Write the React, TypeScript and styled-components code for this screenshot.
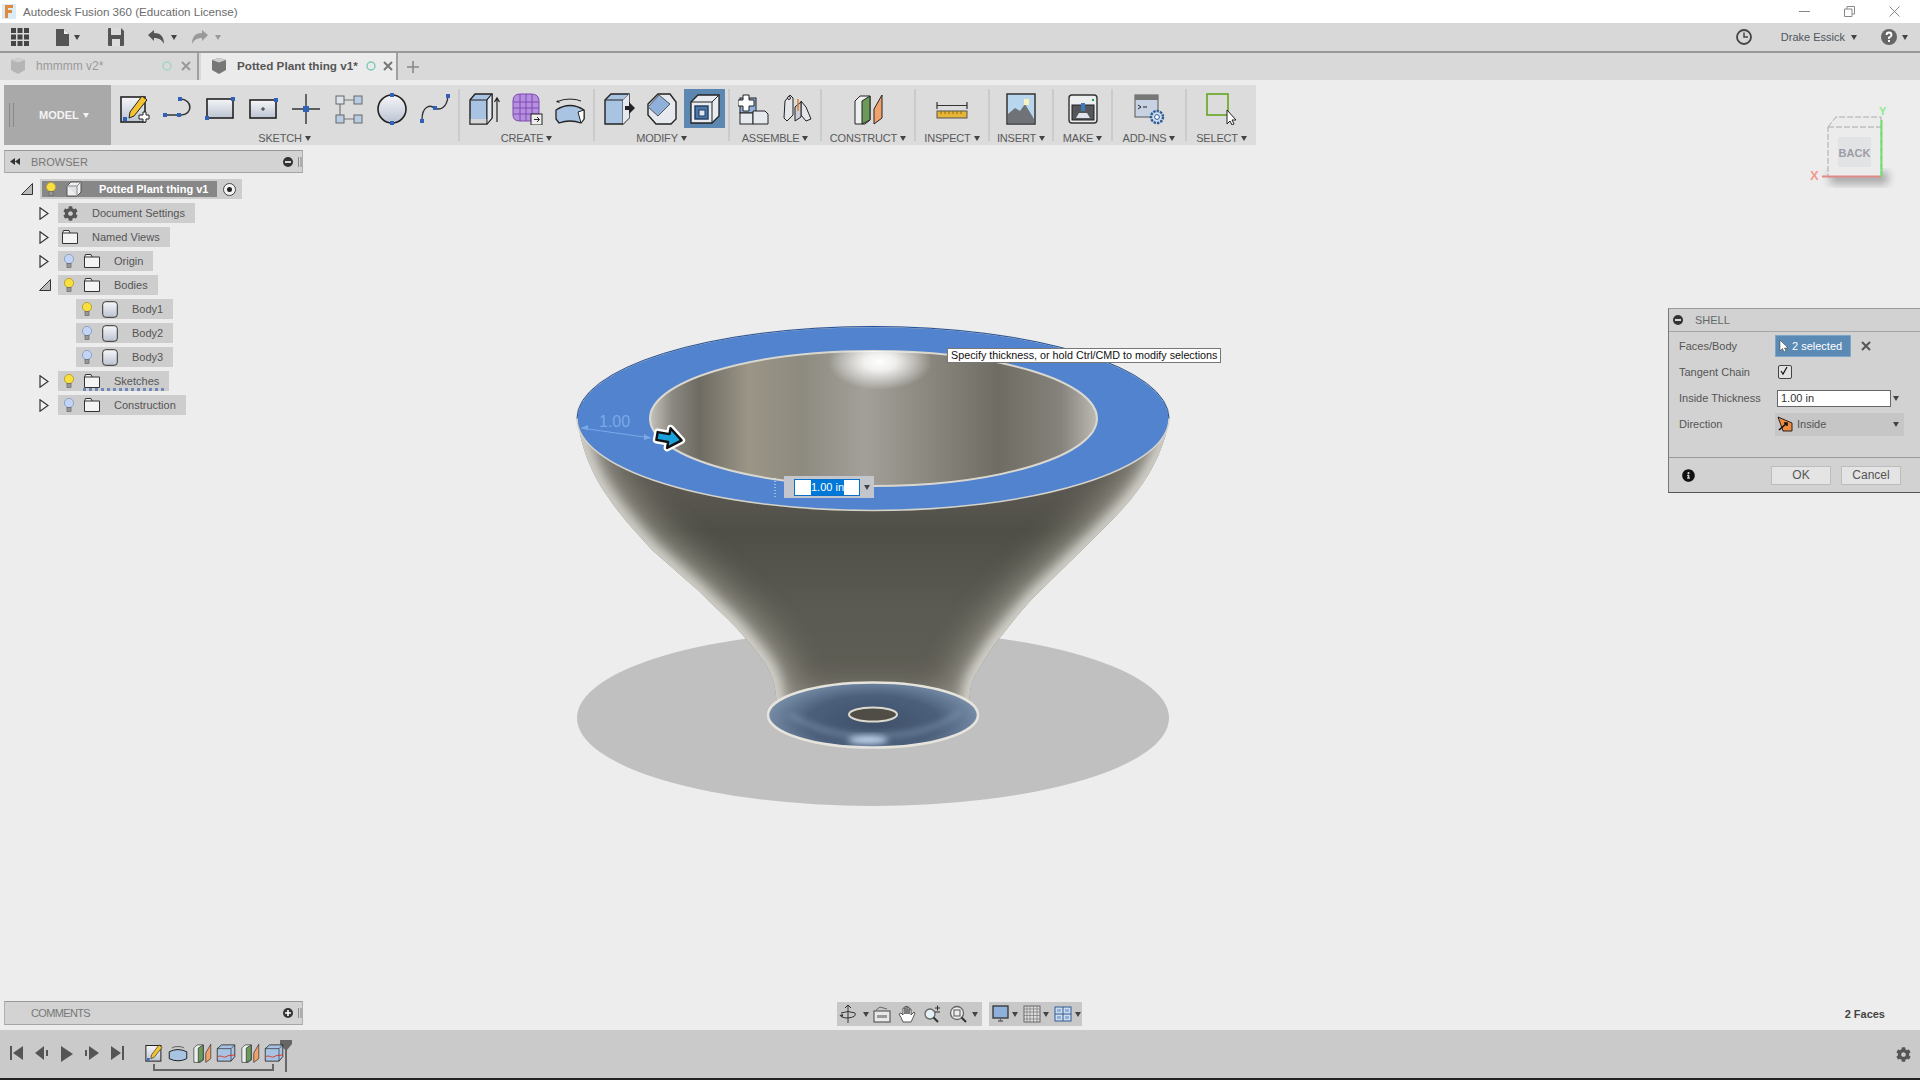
import React from "react";
import styled, { createGlobalStyle } from "styled-components";
import { FaCog, FaInfoCircle } from "react-icons/fa";

const GlobalStyle = createGlobalStyle`
  html, body {
    margin: 0;
    height: 100%;
    overflow: hidden;
    background: #ededed;
    font-family: "Liberation Sans", Arial, sans-serif;
  }
`;

const Shell = styled.div`
  height: 100vh;
  display: flex;
  flex-direction: column;
  color: #555;
  font-size: 11px;
`;

/* title + quick access */
const TitleBar = styled.div`
  height: 23px;
  background: #fff;
  display: flex;
  align-items: center;
  padding: 0 3px 0 2px;
  font-size: 11.6px;
  color: #6b6b6b;
`;
const TitleText = styled.span`
  margin-left: 7px;
  flex: 1;
`;
const WindowBtn = styled.span`
  width: 45px;
  height: 21px;
  display: flex;
  align-items: center;
  justify-content: center;
`;
const QuickBar = styled.div`
  height: 28px;
  background: #d8d8d8;
  display: flex;
  align-items: center;
  padding-left: 11px;
`;
const QuickRight = styled.div`
  margin-left: auto;
  display: flex;
  align-items: center;
  padding-right: 12px;
`;
const UserName = styled.span`
  color: #4d5560;
  font-size: 11px;
  margin: 0 6px 0 29px;
`;
const Caret = styled.i<{ $m?: number; $c?: string }>`
  display: inline-block;
  width: 0;
  height: 0;
  flex: none;
  border-left: 3.5px solid transparent;
  border-right: 3.5px solid transparent;
  border-top: 5px solid ${(p) => p.$c || "#444"};
  margin-left: ${(p) => p.$m ?? 4}px;
`;

/* tabs */
const TabBar = styled.div`
  height: 29px;
  box-sizing: border-box;
  border-top: 2px solid #999;
  background: #d9d9d9;
  display: flex;
  align-items: stretch;
`;
const Tab = styled.div<{ $active?: boolean; $w: number }>`
  width: ${(p) => p.$w}px;
  box-sizing: border-box;
  display: flex;
  align-items: center;
  padding-left: 9px;
  padding-bottom: 2px;
  background: ${(p) => (p.$active ? "#ebebeb" : "transparent")};
  border-right: 2px solid #a0a0a0;
  color: ${(p) => (p.$active ? "#555" : "#999")};
  font-size: ${(p) => (p.$active ? 11.7 : 12)}px;
  font-weight: ${(p) => (p.$active ? 700 : 400)};
  margin-right: ${(p) => (p.$active ? 0 : 2)}px;
`;
const TabName = styled.span<{ $w: number }>`
  margin-left: 9px;
  width: ${(p) => p.$w}px;
  white-space: nowrap;
`;
const TabClose = styled.span<{ $m: number }>`
  margin-left: ${(p) => p.$m}px;
  display: flex;
`;
const PlusTab = styled.span`
  margin-left: 9px;
  display: flex;
  align-items: center;
`;

/* viewport */
const Viewport = styled.div`
  flex: 1;
  min-height: 0;
  position: relative;
  background: #ededed;
`;
const Scene = styled.svg`
  position: absolute;
  inset: 0;
`;
const LeftColumn = styled.div`
  position: relative;
  height: 100%;
  box-sizing: border-box;
  display: flex;
  flex-direction: column;
  align-items: flex-start;
  padding: 5px 0 4px 4px;
`;

/* toolbar */
const Toolbar = styled.div`
  height: 60px;
  display: flex;
  background: #dcdcdc;
`;
const ModelBtn = styled.div`
  width: 107px;
  background: #a9a9a9;
  display: flex;
  align-items: center;
  color: #f4f4f4;
  font-size: 11px;
  font-weight: 700;
  padding-left: 5px;
  box-sizing: border-box;
`;
const Grip = styled.span`
  width: 3px;
  height: 24px;
  border-left: 1px solid #8a8a8a;
  border-right: 1px solid #8a8a8a;
  margin-right: 25px;
`;
const ToolGroup = styled.div<{ $w: number }>`
  width: ${(p) => p.$w}px;
  box-sizing: border-box;
  display: flex;
  flex-direction: column;
  align-items: center;
`;
const ToolIcons = styled.div`
  height: 47px;
  display: flex;
  align-items: center;
  justify-content: center;
`;
const ToolCell = styled.div<{ $active?: boolean }>`
  width: 41px;
  height: 39px;
  margin: 0 1px;
  display: flex;
  align-items: center;
  justify-content: center;
  background: ${(p) => (p.$active ? "#5b87b0" : "transparent")};
`;
const ToolLabel = styled.div`
  display: flex;
  align-items: center;
  font-size: 11px;
  color: #5a5a5a;
  white-space: nowrap;
  letter-spacing: -0.2px;
`;
const Divider = styled.div`
  width: 2px;
  margin: 4px 0;
  background: #cbcbcb;
`;
const Ico = styled.svg.attrs({ viewBox: "0 0 32 32" })<{ $s?: number }>`
  width: ${(p) => p.$s ?? 32}px;
  height: ${(p) => p.$s ?? 32}px;
  flex: none;
  display: block;
`;

/* panels */
const SidePanel = styled.div<{ $auto?: boolean }>`
  width: 299px;
  height: ${(p) => (p.$auto ? 24 : 23)}px;
  box-sizing: border-box;
  margin-top: ${(p) => (p.$auto ? "auto" : "5px")};
  margin-bottom: ${(p) => (p.$auto ? 1 : 0)}px;
  background: #d3d3d3;
  border: 1px solid #b0b0b0;
  border-top-color: #999;
  border-bottom-color: #a5a5a5;
  display: flex;
  align-items: center;
  color: #777;
  font-size: 11px;
`;
const PanelTitle = styled.span<{ $tight?: boolean }>`
  flex: 1;
  margin-left: 26px;
  letter-spacing: ${(p) => (p.$tight ? "-0.65px" : "0")};
`;
const PanelRewind = styled.span`
  width: 0;
  display: flex;
`;
const Tree = styled.div`
  margin-top: 4px;
`;
const Row = styled.div<{ $depth: number }>`
  height: 24px;
  display: flex;
  align-items: center;
  padding-left: ${(p) => 17 + p.$depth * 18}px;
`;
const Toggle = styled.span`
  width: 19px;
  height: 20px;
  display: flex;
  align-items: center;
`;
const Chip = styled.div<{ $root?: boolean }>`
  height: 20px;
  background: #cdcdcd;
  display: flex;
  align-items: center;
  position: relative;
  padding-right: ${(p) => (p.$root ? 25 : 10)}px;
  color: #555;
  white-space: nowrap;
`;
const RootFill = styled.div`
  height: 16px;
  margin-left: 2px;
  background: #878787;
  color: #fff;
  font-weight: 700;
  display: flex;
  align-items: center;
  padding-right: 9px;
`;
const Slot = styled.span<{ $w?: number }>`
  width: ${(p) => p.$w ?? 22}px;
  display: flex;
  justify-content: center;
  align-items: center;
`;
const RowText = styled.span<{ $m?: number }>`
  margin-left: ${(p) => p.$m ?? 11}px;
`;
const RadioWrap = styled.span`
  position: absolute;
  right: 6px;
  display: flex;
`;
const Squiggle = styled.span`
  position: absolute;
  left: 25px;
  right: 2px;
  bottom: 0;
  height: 3px;
  background: repeating-linear-gradient(90deg, #6f88b8 0 3px, transparent 3px 6px);
`;

/* shell dialog */
const Dialog = styled.div`
  position: absolute;
  top: 228px;
  right: 0;
  width: 252px;
  height: 185px;
  box-sizing: border-box;
  background: #d2d2d2;
  border-top: 1px solid #999;
  border-left: 1px solid #777;
  border-bottom: 1px solid #555;
  display: flex;
  flex-direction: column;
  font-size: 11px;
  color: #555;
`;
const DialogHead = styled.div`
  height: 23px;
  flex: none;
  box-sizing: border-box;
  display: flex;
  align-items: center;
  padding: 0 0 1px 4px;
  border-bottom: 1px solid #a5a5a5;
  color: #666;
`;
const DialogBody = styled.div`
  flex: 1;
  padding: 1px 0 0 10px;
  display: grid;
  grid-template-columns: 96px 1fr;
  grid-auto-rows: 26px;
  align-items: center;
  align-content: start;
`;
const ValueRow = styled.div`
  display: flex;
  align-items: center;
`;
const SelectBtn = styled.div`
  width: 76px;
  height: 22px;
  background: #5b8ab4;
  border: 1px solid #7da6c8;
  box-sizing: border-box;
  color: #fff;
  display: flex;
  align-items: center;
  padding-left: 3px;
  gap: 4px;
`;
const CheckBox = styled.span`
  width: 12px;
  height: 12px;
  margin-left: 3px;
  border: 1px solid #444;
  border-radius: 2px;
  background: #e2e2e2;
  display: flex;
`;
const TextInput = styled.div`
  width: 114px;
  height: 17px;
  margin-left: 2px;
  box-sizing: border-box;
  border: 1px solid #666;
  background: #fff;
  color: #333;
  display: flex;
  align-items: center;
  padding-left: 3px;
`;
const DirSelect = styled.div`
  width: 129px;
  height: 23px;
  background: #c6c6c6;
  display: flex;
  align-items: center;
  padding: 0 5px 0 2px;
  box-sizing: border-box;
`;
const DialogFoot = styled.div`
  height: 35px;
  flex: none;
  box-sizing: border-box;
  border-top: 1px solid #9a9a9a;
  display: flex;
  align-items: center;
  padding-left: 13px;
  color: #111;
  font-size: 13px;
`;
const DialogBtn = styled.div<{ $first?: boolean }>`
  width: 60px;
  height: 19px;
  margin-left: ${(p) => (p.$first ? "76px" : "10px")};
  box-sizing: border-box;
  background: #e4e4e4;
  border: 1px solid #bdbdbd;
  display: flex;
  align-items: center;
  justify-content: center;
  color: #555;
  font-size: 12px;
`;

/* on-canvas overlays */
const Tooltip = styled.div`
  position: absolute;
  left: 947px;
  top: 268px;
  height: 15px;
  box-sizing: border-box;
  padding: 0 3px;
  background: #fff;
  border: 1px solid #777;
  color: #111;
  font-size: 10.75px;
  line-height: 13px;
  white-space: nowrap;
`;
const InlineValue = styled.div`
  position: absolute;
  left: 784px;
  top: 396px;
  width: 90px;
  height: 22px;
  box-sizing: border-box;
  background: #c3c6cc;
  display: flex;
  align-items: center;
  padding-left: 10px;
`;
const InlineInput = styled.div`
  width: 66px;
  height: 17px;
  box-sizing: border-box;
  background: #fff;
  border: 1px solid #0a6fc9;
  display: flex;
  align-items: center;
  padding-left: 16px;
`;
const Selected = styled.span`
  background: #0078d7;
  color: #fff;
  font-size: 11px;
  line-height: 15px;
`;
const Cube = styled.svg`
  position: absolute;
  left: 1800px;
  top: 20px;
`;
const NavBar = styled.div`
  position: absolute;
  left: 837px;
  bottom: 4px;
  display: flex;
  gap: 7px;
`;
const NavGroup = styled.div<{ $w: number; $pad: number }>`
  width: ${(p) => p.$w}px;
  height: 24px;
  background: #c8c8c8;
  display: flex;
  align-items: center;
  padding-left: ${(p) => p.$pad}px;
  box-sizing: border-box;
`;
const FaceCount = styled.div`
  position: absolute;
  right: 35px;
  bottom: 10px;
  font-weight: 700;
  color: #444;
`;

/* timeline */
const Timeline = styled.div`
  height: 50px;
  box-sizing: border-box;
  background: #cacaca;
  border-bottom: 2px solid #222;
  display: flex;
  align-items: center;
  padding: 0 9px 0 9px;
`;
const Transport = styled.div`
  width: 135px;
  display: flex;
  gap: 9px;
  flex: none;
`;
const Steps = styled.div`
  position: relative;
  display: flex;
  gap: 4px;
  padding-bottom: 8px;
  margin-top: 6px;
  flex: none;
`;
const Bracket = styled.div`
  position: absolute;
  left: 9px;
  right: 10px;
  bottom: 0;
  height: 5px;
  border: 2px solid #666;
  border-top: 0;
`;
const Marker = styled.svg`
  margin-left: -4px;
  margin-top: 6px;
  flex: none;
`;
const Gear = styled.div`
  margin-left: auto;
  display: flex;
  color: #555;
  font-size: 15px;
`;

/* small drawings */
const N = ({ x, y, s = 4 }: { x: number; y: number; s?: number }) => (
  <rect x={x - s / 2} y={y - s / 2} width={s} height={s} fill="#2f62b8" />
);
const STROKE = "#333";

const SketchIco = ({ s }: { s?: number }) => (
  <Ico $s={s}>
    <rect x="3" y="4" width="24" height="25" fill="url(#panelGrad)" stroke="#222" strokeWidth="1.6" />
    <path d="M12 19 L24 3 L29 7 L16 23 L11 25Z" fill="#f4c430" stroke="#222" strokeWidth="1" />
    <N x={7} y={26} />
    {!s && <path d="M21 22h4v-3h3v3h3v4h-3v3h-3v-3h-4z" fill="#fff" stroke="#222" />}
  </Ico>
);
const LineIco = () => (
  <Ico>
    <path d="M4 22 H20 C32 22 32 6 19 6" fill="none" stroke={STROKE} strokeWidth="1.6" />
    <N x={4} y={22} />
    <N x={18} y={22} />
    <N x={19} y={6} />
  </Ico>
);
const RectIco = () => (
  <Ico>
    <rect x="3" y="6" width="26" height="19" fill="url(#panelGrad)" stroke="#222" strokeWidth="1.6" />
    <N x={3} y={25} />
    <N x={29} y={6} />
  </Ico>
);
const CenterRectIco = () => (
  <Ico>
    <rect x="3" y="7" width="26" height="18" fill="url(#panelGrad)" stroke="#222" strokeWidth="1.6" />
    <path d="M16 14v4M14 16h4" stroke="#333" />
    <N x={29} y={7} />
  </Ico>
);
const PointIco = () => (
  <Ico>
    <path d="M16 1V31M2 16H30" stroke={STROKE} strokeWidth="1.4" />
    <N x={16} y={16} s={6} />
  </Ico>
);
const PatternIco = () => (
  <Ico>
    <path d="M10 7H22M10 26H22M7 10V23" stroke="#777" strokeWidth="1.2" />
    <rect x="3" y="3" width="8" height="8" fill="#dde3ec" stroke="#666" />
    <rect x="21" y="3" width="8" height="8" fill="#b8cde4" stroke="#666" />
    <rect x="3" y="22" width="8" height="8" fill="#b8cde4" stroke="#666" />
    <rect x="21" y="22" width="8" height="8" fill="#b8cde4" stroke="#666" />
  </Ico>
);
const CircleIco = () => (
  <Ico>
    <ellipse cx="16" cy="16" rx="14" ry="14" fill="url(#panelGrad)" stroke="#222" strokeWidth="1.6" />
    <N x={16} y={2} />
    <N x={16} y={30} />
  </Ico>
);
const SplineIco = () => (
  <Ico>
    <path d="M3 27 C3 12 12 12 15 15 C22 18 28 14 29 3" fill="none" stroke={STROKE} strokeWidth="1.4" />
    <N x={3} y={28} />
    <N x={16} y={15} />
    <N x={29} y={3} />
  </Ico>
);
const ExtrudeIco = () => (
  <Ico>
    <path d="M2 7 L7 1H24V25L19 31H2Z" fill="#a9c4e2" stroke="#222" strokeWidth="1.4" />
    <path d="M2 7H19V31M19 7L24 1" fill="none" stroke="#222" strokeWidth="1.2" />
    <path d="M19 7L24 1V25L19 31Z" fill="#dfe7f0" stroke="#222" />
    <rect x="2.7" y="26" width="15.6" height="4.4" fill="#d6d6d6" />
    <path d="M29 29V6M26.5 9L29 5L31.5 9" fill="none" stroke="#222" strokeWidth="1.2" />
  </Ico>
);
const FormIco = () => (
  <Ico>
    <path d="M2 8 Q2 1 9 1H20Q28 1 28 8V22Q28 28 21 28H9Q2 28 2 22Z" fill="#b78fe0" stroke="#7c4bb0" />
    <path d="M2 9H28M2 15H28M2 21H28M9 1V28M15 1V28M21 1V28" stroke="#7c4bb0" />
    <rect x="20" y="21" width="11" height="11" fill="#eee" stroke="#222" />
    <path d="M23 26.5H28M26 24l2.5 2.5L26 29" fill="none" stroke="#222" />
  </Ico>
);
const RevolveIco = () => (
  <Ico>
    <path d="M5 8 A14 5 0 0 1 27 8" fill="none" stroke="#222" />
    <path d="M4 7L2 9L6 10Z" fill="#222" />
    <path d="M2 17 Q16 8 30 17 V26 L27 30 Q16 26 5 30 L2 26Z" fill="#a9c4e2" stroke="#222" strokeWidth="1.3" />
    <path d="M24 19 L30 17 V26 L27 30Z" fill="#fff" stroke="#222" />
  </Ico>
);
const PressIco = () => (
  <Ico>
    <path d="M2 7 L8 1H26V25L20 31H2Z" fill="#a9c4e2" stroke="#222" strokeWidth="1.4" />
    <path d="M20 31V7L26 1M2 7H20" fill="none" stroke="#222" />
    <path d="M20 7L26 1V25L20 31Z" fill="#e5e9ee" />
    <path d="M22 13h4v-4l6 6-6 6v-4h-4z" fill="#222" />
  </Ico>
);
const FilletIco = () => (
  <Ico>
    <path d="M2 11 L12 1H24L30 9V26L25 31H10L2 22Z" fill="#e6e9ee" stroke="#222" strokeWidth="1.4" />
    <path d="M2 14 L13 2 L24 11 L12 23Z" fill="#8fb0da" stroke="#555" />
  </Ico>
);
const ShellIco = () => (
  <Ico>
    <path d="M2 9L9 2H30V23L23 30H2Z" fill="#e8ecf0" stroke="#222" strokeWidth="1.3" />
    <path d="M2 9H23V30M23 9L30 2" fill="none" stroke="#222" />
    <rect x="6" y="13" width="13" height="13" fill="#4f78a8" stroke="#1d3b60" strokeWidth="1.4" />
    <rect x="10" y="17" width="6" height="6" fill="#dfe7f0" stroke="#1d3b60" />
  </Ico>
);
const NewCompIco = () => (
  <Ico>
    <rect x="2" y="5" width="16" height="15" fill="#8fb0da" stroke="#222" />
    <rect x="2" y="20" width="13" height="11" fill="#e6e9ee" stroke="#222" />
    <path d="M15 31V18h12l3 3v10z" fill="#e6e9ee" stroke="#222" />
    <path d="M5 2h6v5h5v6h-5v5H5v-5H0V7h5z" fill="#fff" stroke="#222" />
  </Ico>
);
const JointIco = () => (
  <Ico>
    <path d="M4 8 L9 2L12 5V22L6 28L3 25Z" fill="#e4e6ea" stroke="#222" />
    <path d="M20 8L25 14L30 26L25 28L20 22Z" fill="#e4e6ea" stroke="#222" />
    <path d="M14 14L20 9V24L14 28Z" fill="#c9ced6" stroke="#222" />
    <path d="M17 6V18" stroke="#e07a20" strokeWidth="1.4" />
    <circle cx="8" cy="5" r="1.5" fill="#fff" stroke="#222" />
  </Ico>
);
const ConstructIco = ({ s }: { s?: number }) => (
  <Ico $s={s}>
    <path d="M3 8L8 3H18V27L13 31H3Z" fill="#eef0f0" stroke="#222" />
    <path d="M10 8L18 3V27L10 31Z" fill="#6b9a5a" stroke="#222" />
    <path d="M22 16L30 2V25L22 31Z" fill="#f1a26c" stroke="#222" />
  </Ico>
);
const InspectIco = () => (
  <Ico>
    <path d="M1 9V16M31 9V16M1 12.5H31" stroke="#333" strokeWidth="1.2" />
    <rect x="1" y="18" width="30" height="7" fill="#e6b437" stroke="#555" />
    <path d="M5 18v3M9 18v3M13 18v3M17 18v3M21 18v3M25 18v3" stroke="#8c6a13" />
  </Ico>
);
const InsertIco = () => (
  <Ico>
    <rect x="2" y="1" width="28" height="30" fill="#b8d6ee" stroke="#333" strokeWidth="1.5" />
    <path d="M3 30V21L10 15L15 18L20 11L29 26V30Z" fill="#6f7378" />
    <rect x="19" y="6" width="5" height="6" fill="#f7f2c0" />
  </Ico>
);
const MakeIco = () => (
  <Ico>
    <rect x="2" y="2" width="28" height="28" rx="3" fill="#eceef0" stroke="#333" strokeWidth="1.4" />
    <rect x="5" y="12" width="22" height="15" fill="#55565a" stroke="#222" />
    <rect x="14" y="10" width="4" height="8" fill="#3d78c0" />
    <path d="M9 25L12 20H20L23 25Z" fill="#dfe4ea" />
    <rect x="25" y="6" width="2" height="2" fill="#1c9c3c" />
  </Ico>
);
const AddInsIco = () => (
  <Ico>
    <rect x="2" y="2" width="23" height="22" fill="#c7d3e2" stroke="#555" />
    <rect x="2" y="2" width="23" height="5" fill="#777" />
    <path d="M5 12l3 2-3 2M10 14h4" fill="none" stroke="#222" />
    <circle cx="24" cy="24" r="6" fill="#cfe0f2" stroke="#2f5b96" strokeWidth="2.4" strokeDasharray="2.4 1" />
    <circle cx="24" cy="24" r="2.4" fill="#fff" stroke="#2f5b96" />
  </Ico>
);
const SelectIco = () => (
  <Ico>
    <rect x="1" y="1" width="21" height="21" fill="none" stroke="#5ea012" strokeWidth="1.5" />
    <path d="M21 17V31L24 28L26 32L28 31L26 27H30Z" fill="#fff" stroke="#222" />
  </Ico>
);
const SurfaceIco = ({ s }: { s?: number }) => (
  <Ico $s={s}>
    <path d="M2 9L9 3H30V22L24 29H2Z" fill="#a9c4e2" stroke="#222" strokeWidth="1.3" />
    <path d="M2 9H24V29M24 9L30 3" fill="none" stroke="#222" />
    <path d="M2 23C8 17 12 26 18 21C22 18 26 22 30 18" fill="none" stroke="#d93a2b" strokeWidth="1.6" />
  </Ico>
);
const RevolveMini = ({ s }: { s?: number }) => (
  <Ico $s={s}>
    <path d="M6 8A11 4 0 0 1 26 8" fill="none" stroke="#222" />
    <path d="M2 14Q16 7 30 14V25Q16 32 2 25Z" fill="#a9c4e2" stroke="#222" strokeWidth="1.6" />
  </Ico>
);

const Bulb = ({ on }: { on?: boolean }) => (
  <svg width="12" height="16" viewBox="0 0 12 16">
    <circle cx="6" cy="6" r="4.6" fill={on ? "#f9df3f" : "#c3d4f6"} stroke={on ? "#b9a23a" : "#8ea2c9"} />
    <rect x="4" y="10.5" width="4" height="4" fill="#999" stroke="#666" strokeWidth=".7" />
  </svg>
);
const Folder = () => (
  <svg width="16" height="14" viewBox="0 0 16 14">
    <path d="M.5 3V13.5H15.5V3H8L7 .5H1.5L.5 3H8" fill="#f4f4f4" stroke="#333" />
  </svg>
);
const BodyShape = () => (
  <svg width="16" height="17" viewBox="0 0 16 17">
    <rect x=".7" y=".7" width="14.6" height="15.6" rx="3" fill="url(#panelGrad)" stroke="#333" />
  </svg>
);
const CubeMini = () => (
  <svg width="16" height="16" viewBox="0 0 16 16">
    <path d="M1 5L5 1H15V11L11 15H1Z" fill="#eef0f2" stroke="#555" />
    <path d="M11 15V5H1M11 5L15 1" fill="#dfe3e8" stroke="#888" />
  </svg>
);
const Tri = ({ open }: { open?: boolean }) =>
  open ? (
    <svg width="12" height="12" viewBox="0 0 12 12">
      <path d="M.5 11.5L11.5 .5V11.5Z" fill="#bbb" stroke="#333" />
    </svg>
  ) : (
    <svg width="10" height="13" viewBox="0 0 10 13">
      <path d="M1 .8L9 6.5L1 12.2Z" fill="#f2f2f2" stroke="#333" strokeWidth="1.2" />
    </svg>
  );
const CircleMark = ({ plus }: { plus?: boolean }) => (
  <svg width="10" height="10" viewBox="0 0 10 10">
    <circle cx="5" cy="5" r="5" fill="#333" />
    <path d={plus ? "M2 5H8M5 2V8" : "M2 5H8"} stroke="#fff" strokeWidth="1.6" />
  </svg>
);
const PanelGrip = () => (
  <svg width="4" height="12" viewBox="0 0 4 12" style={{ marginLeft: 5 }}>
    <path d="M.5 1V11M3 1V11" stroke="#888" />
  </svg>
);
const Cross = ({ c }: { c: string }) => (
  <svg width="10" height="10" viewBox="0 0 10 10">
    <path d="M1 1L9 9M9 1L1 9" stroke={c} strokeWidth="2" />
  </svg>
);
const Ring = ({ c }: { c: string }) => (
  <svg width="10" height="10" viewBox="0 0 10 10" style={{ marginLeft: 6 }}>
    <circle cx="5" cy="5" r="4" fill="none" stroke={c} strokeWidth="1.4" />
  </svg>
);
const TabCube = ({ c }: { c: string }) => (
  <svg width="18" height="18" viewBox="0 0 18 18">
    <path d="M2 3L9 1L16 3V13L9 17L2 13Z" fill={c} />
    <path d="M2 3L9 5.5L16 3L9 1Z" fill="#cfcfcf" />
  </svg>
);

const groups = [
  { label: "SKETCH", w: 347, icons: [SketchIco, LineIco, RectIco, CenterRectIco, PointIco, PatternIco, CircleIco, SplineIco] },
  { label: "CREATE", w: 133, icons: [ExtrudeIco, FormIco, RevolveIco] },
  { label: "MODIFY", w: 133, icons: [PressIco, FilletIco, ShellIco], active: 2 },
  { label: "ASSEMBLE", w: 90, icons: [NewCompIco, JointIco] },
  { label: "CONSTRUCT", w: 92, icons: [ConstructIco] },
  { label: "INSPECT", w: 72, icons: [InspectIco] },
  { label: "INSERT", w: 62, icons: [InsertIco] },
  { label: "MAKE", w: 57, icons: [MakeIco] },
  { label: "ADD-INS", w: 72, icons: [AddInsIco] },
  { label: "SELECT", w: 69, icons: [SelectIco] },
];

const treeRows = [
  { depth: 1, toggle: "closed", icon: "gear", text: "Document Settings" },
  { depth: 1, toggle: "closed", icon: "folder", text: "Named Views" },
  { depth: 1, toggle: "closed", bulb: "off", icon: "folder", text: "Origin" },
  { depth: 1, toggle: "open", bulb: "on", icon: "folder", text: "Bodies" },
  { depth: 2, bulb: "on", icon: "body", text: "Body1" },
  { depth: 2, bulb: "off", icon: "body", text: "Body2" },
  { depth: 2, bulb: "off", icon: "body", text: "Body3" },
  { depth: 1, toggle: "closed", bulb: "on", icon: "folder", text: "Sketches", squiggle: true },
  { depth: 1, toggle: "closed", bulb: "off", icon: "folder", text: "Construction" },
];

const BODY =
  "M578 420 C580 445 592 475 608 497 C622 518 637 533 652 550 L701 593 C715 608 730 620 741 633 C752 646 758 653 765 663 C772 674 777 685 777 715 L969 715 C969 688 972 680 976 674 C982 664 990 650 998 640 C1010 625 1020 612 1034 597 L1082 550 C1100 532 1122 512 1138 490 C1153 470 1165 445 1169 420 Z";

function ModelScene() {
  return (
    <Scene width="1920" height="950" viewBox="0 80 1920 950">
      <defs>
        <linearGradient id="panelGrad" x1="0" y1="0" x2="0" y2="1">
          <stop offset="0" stopColor="#f5f6f8" />
          <stop offset="1" stopColor="#bcc4d2" />
        </linearGradient>
        <linearGradient id="bodyFill" gradientUnits="userSpaceOnUse" x1="0" y1="490" x2="0" y2="715">
          <stop offset="0" stopColor="#5a5850" />
          <stop offset=".18" stopColor="#504f47" />
          <stop offset=".55" stopColor="#5c5b53" />
          <stop offset="1" stopColor="#615f56" />
        </linearGradient>
        <linearGradient id="bowlFill" gradientUnits="userSpaceOnUse" x1="650" y1="0" x2="1097" y2="0">
          <stop offset="0" stopColor="#c4c2bb" />
          <stop offset=".05" stopColor="#8a8880" />
          <stop offset=".11" stopColor="#6e6b63" />
          <stop offset=".22" stopColor="#9b9586" />
          <stop offset=".34" stopColor="#8d8a7f" />
          <stop offset=".48" stopColor="#a3a09a" />
          <stop offset=".62" stopColor="#8b887f" />
          <stop offset=".78" stopColor="#6f6c63" />
          <stop offset=".92" stopColor="#85837b" />
          <stop offset="1" stopColor="#bcbab3" />
        </linearGradient>
        <radialGradient id="footFill" gradientUnits="userSpaceOnUse" cx="873" cy="705" r="110" gradientTransform="translate(0 440) scale(1 .4)">
          <stop offset="0" stopColor="#3f5069" />
          <stop offset=".6" stopColor="#4b5f7b" />
          <stop offset="1" stopColor="#7a90aa" />
        </radialGradient>
        <radialGradient id="hot">
          <stop offset="0" stopColor="#fff" />
          <stop offset=".3" stopColor="#fff" stopOpacity=".85" />
          <stop offset="1" stopColor="#fff" stopOpacity="0" />
        </radialGradient>
        <filter id="soft" x="-20%" y="-20%" width="140%" height="140%">
          <feGaussianBlur stdDeviation="7" />
        </filter>
        <filter id="soft3" x="-20%" y="-20%" width="140%" height="140%">
          <feGaussianBlur stdDeviation="16" />
        </filter>
        <filter id="soft2" x="-50%" y="-50%" width="200%" height="200%">
          <feGaussianBlur stdDeviation="3" />
        </filter>
        <clipPath id="bodyClip">
          <path d={BODY} />
        </clipPath>
        <clipPath id="bowlClip">
          <ellipse cx="873.5" cy="418.5" rx="223.5" ry="67.5" />
        </clipPath>
      </defs>
      <ellipse cx="873" cy="718" rx="296" ry="88" fill="#c0c0c0" />
      <path d={BODY} fill="url(#bodyFill)" />
      <g clipPath="url(#bodyClip)">
        <path d={BODY} fill="none" stroke="#bdbbb0" strokeWidth="44" opacity=".55" filter="url(#soft3)" />
        <path d={BODY} fill="none" stroke="#f0efe9" strokeWidth="12" filter="url(#soft)" />
      </g>
      <ellipse cx="873" cy="418.5" rx="296" ry="92" fill="#5283cf" stroke="#d5d3ca" strokeWidth="1.5" />
      <path d="M577 418.500 A296 92 0 0 1 1169 418.500" fill="none" stroke="#1f4f9c" strokeWidth="1" />
      <ellipse cx="873.5" cy="418.5" rx="223.5" ry="67.5" fill="url(#bowlFill)" stroke="#d9d7ce" strokeWidth="2" />
      <g clipPath="url(#bowlClip)">
        <ellipse cx="880" cy="362" rx="52" ry="28" fill="url(#hot)" />
      </g>
      <ellipse cx="873" cy="715" rx="105" ry="32.5" fill="url(#footFill)" stroke="#e6e4dc" strokeWidth="2.5" />
      <path d="M790 715 Q830 738 873 736 Q930 736 960 712" fill="none" stroke="#8fa4c0" strokeWidth="4" opacity=".6" filter="url(#soft2)" />
      <ellipse cx="868" cy="740" rx="20" ry="4" fill="#c9dcf5" filter="url(#soft2)" />
      <ellipse cx="873" cy="714.5" rx="24" ry="7" fill="#4f4d45" stroke="#dcdad0" strokeWidth="2" />
      <text x="599" y="427" fontSize="16" fill="#7ba9e8" fontFamily="Liberation Sans, Arial, sans-serif">1.00</text>
      <path d="M581 428 L651 438" stroke="#7ba9e8" strokeWidth="1" />
      <path d="M581 428l7-3v5zM651 438l-7-4v6z" fill="#7ba9e8" />
      <path d="M775 478V498" stroke="#eee" strokeDasharray="1 2" />
      <g transform="translate(657 436) rotate(10)">
        <path d="M0 -4 H12 V-10 L25 0 L12 10 V4 H0 Z" fill="#fff" stroke="#fff" strokeWidth="7" strokeLinejoin="round" />
        <path d="M0 -4 H12 V-10 L25 0 L12 10 V4 H0 Z" fill="#1aa1dc" stroke="#111" strokeWidth="2.4" strokeLinejoin="round" />
      </g>
    </Scene>
  );
}

function App() {
  return (
    <Shell>
      <GlobalStyle />
      <TitleBar>
        <svg width="14" height="15" viewBox="0 0 14 15">
          <rect width="14" height="15" fill="#dcecf6" />
          <path d="M3 1H11V4H6V6H10V9H6V14H3Z" fill="#e08a3c" />
        </svg>
        <TitleText>Autodesk Fusion 360 (Education License)</TitleText>
        <WindowBtn>
          <svg width="11" height="11" viewBox="0 0 11 11"><path d="M0 5.5H11" stroke="#888" /></svg>
        </WindowBtn>
        <WindowBtn>
          <svg width="11" height="11" viewBox="0 0 11 11"><path d="M.5 3H8V10.500H.5ZM3 3V.5H10.500V8H8" fill="none" stroke="#888" /></svg>
        </WindowBtn>
        <WindowBtn>
          <svg width="11" height="11" viewBox="0 0 11 11"><path d="M.5 .5L10.500 10.500M10.500 .5L.5 10.500" stroke="#888" /></svg>
        </WindowBtn>
      </TitleBar>

      <QuickBar>
        <svg width="18" height="18" viewBox="0 0 18 18">
          <path d="M0 0h5v5H0zM6.500 0h5v5h-5zM13 0h5v5h-5zM0 6.500h5v5H0zM6.500 6.500h5v5h-5zM13 6.500h5v5h-5zM0 13h5v5H0zM6.500 13h5v5h-5zM13 13h5v5h-5z" fill="#444" />
        </svg>
        <svg width="13" height="17" viewBox="0 0 13 17" style={{ marginLeft: 27 }}>
          <path d="M0 0H8L13 5V17H0Z" fill="#555" />
          <path d="M8 0V5H13" fill="#eee" />
        </svg>
        <Caret $m={5} />
        <svg width="16" height="18" viewBox="0 0 16 18" style={{ marginLeft: 28 }}>
          <path d="M0 1Q0 0 1 0H13L16 3V17Q16 18 15 18H1Q0 18 0 17Z" fill="#555" />
          <rect x="3" y="0" width="10" height="7" fill="#ddd" />
          <rect x="4" y="11" width="8" height="7" fill="#ddd" />
        </svg>
        <svg width="16" height="14" viewBox="0 0 16 14" style={{ marginLeft: 24 }}>
          <path d="M0 5L6 0V3C12 3 16 6 16 14C14 10 11 8 6 8V11Z" fill="#555" />
        </svg>
        <Caret $m={7} />
        <svg width="16" height="14" viewBox="0 0 16 14" style={{ marginLeft: 15 }}>
          <path d="M16 5L10 0V3C4 3 0 6 0 14C2 10 5 8 10 8V11Z" fill="#999" />
        </svg>
        <Caret $m={7} $c="#999" />
        <QuickRight>
          <svg width="16" height="16" viewBox="0 0 16 16">
            <circle cx="8" cy="8" r="7" fill="none" stroke="#444" strokeWidth="1.8" />
            <path d="M8 3.500V8H12" fill="none" stroke="#444" strokeWidth="1.5" />
          </svg>
          <UserName>Drake Essick</UserName>
          <Caret $m={0} />
          <svg width="16" height="16" viewBox="0 0 16 16" style={{ marginLeft: 24 }}>
            <circle cx="8" cy="8" r="8" fill="#666" />
            <path d="M5.500 6Q5.500 3.500 8 3.500Q10.500 3.500 10.500 6Q10.500 7.500 8 8.500V10" fill="none" stroke="#fff" strokeWidth="1.8" />
            <rect x="7" y="11" width="2" height="2" fill="#fff" />
          </svg>
          <Caret $m={5} />
        </QuickRight>
      </QuickBar>

      <TabBar>
        <Tab $w={199}>
          <TabCube c="#b5b5b5" />
          <TabName $w={120}>hmmmm v2*</TabName>
          <Ring c="#9fd5c5" />
          <TabClose $m={9}><Cross c="#999" /></TabClose>
        </Tab>
        <Tab $active $w={197}>
          <TabCube c="#777" />
          <TabName $w={123}>Potted Plant thing v1*</TabName>
          <Ring c="#7ac9b8" />
          <TabClose $m={7}><Cross c="#777" /></TabClose>
        </Tab>
        <PlusTab>
          <svg width="12" height="12" viewBox="0 0 12 12"><path d="M6 0V12M0 6H12" stroke="#888" strokeWidth="1.6" /></svg>
        </PlusTab>
      </TabBar>

      <Viewport>
        <ModelScene />
        <LeftColumn>
          <Toolbar>
            <ModelBtn>
              <Grip />
              MODEL
              <Caret $c="#f4f4f4" />
            </ModelBtn>
            {groups.map((g, gi) => (
              <React.Fragment key={g.label}>
                <ToolGroup $w={g.w}>
                  <ToolIcons>
                    {g.icons.map((Icon, i) => (
                      <ToolCell key={i} $active={g.active === i}>
                        <Icon />
                      </ToolCell>
                    ))}
                  </ToolIcons>
                  <ToolLabel>
                    {g.label}
                    <Caret $m={3} />
                  </ToolLabel>
                </ToolGroup>
                {gi < groups.length - 1 && <Divider />}
              </React.Fragment>
            ))}
          </Toolbar>

          <SidePanel>
            <PanelRewind>
              <svg width="10" height="7" viewBox="0 0 10 7" style={{ marginLeft: 5, flex: "none" }}>
                <path d="M5 0V7L0 3.500ZM10 0V7L5 3.500Z" fill="#333" />
              </svg>
            </PanelRewind>
            <PanelTitle>BROWSER</PanelTitle>
            <CircleMark />
            <PanelGrip />
          </SidePanel>

          <Tree>
            <Row $depth={0}>
              <Toggle><Tri open /></Toggle>
              <Chip $root>
                <RootFill>
                  <Slot $w={18}><Bulb on /></Slot>
                  <Slot $w={28}><CubeMini /></Slot>
                  <RowText $m={11}>Potted Plant thing v1</RowText>
                </RootFill>
                <RadioWrap>
                  <svg width="13" height="13" viewBox="0 0 13 13">
                    <circle cx="6.500" cy="6.500" r="6" fill="#f4f4f4" stroke="#444" />
                    <circle cx="6.500" cy="6.500" r="2.500" fill="#222" />
                  </svg>
                </RadioWrap>
              </Chip>
            </Row>
            {treeRows.map((r) => (
              <Row key={r.text} $depth={r.depth}>
                <Toggle>{r.toggle && <Tri open={r.toggle === "open"} />}</Toggle>
                <Chip>
                  {r.bulb && <Slot $w={22}><Bulb on={r.bulb === "on"} /></Slot>}
                  <Slot $w={24}>
                    {r.icon === "gear" && <FaCog size={15} color="#555" />}
                    {r.icon === "folder" && <Folder />}
                    {r.icon === "body" && <BodyShape />}
                  </Slot>
                  <RowText $m={10}>{r.text}</RowText>
                  {r.squiggle && <Squiggle />}
                </Chip>
              </Row>
            ))}
          </Tree>

          <SidePanel $auto>
            <PanelTitle $tight>COMMENTS</PanelTitle>
            <CircleMark plus />
            <PanelGrip />
          </SidePanel>
        </LeftColumn>

        <Cube width="100" height="90" viewBox="0 0 100 90">
          <defs>
            <filter id="cubeShadow" x="-30%" y="-30%" width="160%" height="160%">
              <feGaussianBlur stdDeviation="4" />
            </filter>
          </defs>
          <rect x="30" y="72" width="58" height="12" fill="#888" opacity=".7" filter="url(#cubeShadow)" />
          <path d="M28 27L36 17H81V77H28Z" fill="#ececec" />
          <path d="M28 27L36 17H81V77H28Z M28 27H81" fill="none" stroke="#aaa" strokeDasharray="6 2" />
          <rect x="38" y="37" width="33" height="30" fill="#e2e3e5" />
          <text x="54.500" y="57" textAnchor="middle" fontSize="11" fontWeight="700" fill="#9a9da3" fontFamily="Liberation Sans, Arial, sans-serif">BACK</text>
          <path d="M22 76.500H81" stroke="#e08a86" strokeWidth="2" />
          <path d="M81.500 20V77" stroke="#6fe06f" strokeWidth="2" />
          <text x="10" y="80" fontSize="13" fontWeight="700" fill="#f29a96" fontFamily="Liberation Sans, Arial, sans-serif">X</text>
          <text x="79" y="15" fontSize="11" fontWeight="700" fill="#8fe88f" fontFamily="Liberation Sans, Arial, sans-serif">Y</text>
        </Cube>

        <Tooltip>Specify thickness, or hold Ctrl/CMD to modify selections</Tooltip>

        <InlineValue>
          <InlineInput>
            <Selected>1.00 in</Selected>
          </InlineInput>
          <Caret $m={4} />
        </InlineValue>

        <Dialog>
          <DialogHead>
            <CircleMark />
            <span style={{ marginLeft: 12 }}>SHELL</span>
          </DialogHead>
          <DialogBody>
            <span>Faces/Body</span>
            <ValueRow>
              <SelectBtn>
                <svg width="9" height="13" viewBox="0 0 9 13"><path d="M1 0V11L3.500 8.500L5 12L7 11L5.500 8H9Z" fill="#fff" stroke="#333" strokeWidth=".5" /></svg>
                2 selected
              </SelectBtn>
              <span style={{ marginLeft: 10, display: "flex" }}><Cross c="#555" /></span>
            </ValueRow>
            <span>Tangent Chain</span>
            <ValueRow>
              <CheckBox>
                <svg width="10" height="10" viewBox="0 0 10 10"><path d="M2 5L4 8L8 1" fill="none" stroke="#111" strokeWidth="1.2" /></svg>
              </CheckBox>
            </ValueRow>
            <span>Inside Thickness</span>
            <ValueRow>
              <TextInput>1.00 in</TextInput>
              <Caret $m={2} />
            </ValueRow>
            <span>Direction</span>
            <ValueRow>
              <DirSelect>
                <svg width="16" height="16" viewBox="0 0 16 16">
                  <path d="M1 1L15 7V15H6Z" fill="#f08a3c" stroke="#222" />
                  <path d="M2 14L10 7M7 7H10V10" fill="none" stroke="#111" strokeWidth="1.6" />
                </svg>
                <span style={{ marginLeft: 4, flex: 1 }}>Inside</span>
                <Caret $m={0} />
              </DirSelect>
            </ValueRow>
          </DialogBody>
          <DialogFoot>
            <FaInfoCircle />
            <DialogBtn $first>OK</DialogBtn>
            <DialogBtn>Cancel</DialogBtn>
          </DialogFoot>
        </Dialog>

        <NavBar>
          <NavGroup $w={145} $pad={1}>
            <svg width="20" height="20" viewBox="0 0 20 20">
              <path d="M10 1V19M7 4L10 1L13 4" fill="none" stroke="#333" />
              <path d="M3 9Q10 6 17 9Q19 13 10 14Q3 14 2 11" fill="none" stroke="#333" />
              <path d="M2 11l3-1v3z" fill="#333" />
            </svg>
            <Caret $m={5} />
            <svg width="18" height="18" viewBox="0 0 18 18" style={{ marginLeft: 4 }}>
              <path d="M3 5L7 2L14 4" fill="none" stroke="#666" />
              <rect x="1" y="6" width="16" height="11" fill="#e8e8e8" stroke="#444" />
              <rect x="4" y="10" width="10" height="3" fill="#999" />
            </svg>
            <svg width="18" height="18" viewBox="0 0 18 18" style={{ marginLeft: 7 }}>
              <path d="M5 17Q3 12 1 9L3 8L5 10V3L7 3V9V1.500H9V9V2H11V9V4H13V10L16 7L17 8Q15 13 13 17Z" fill="#fff" stroke="#333" strokeWidth=".8" />
            </svg>
            <svg width="18" height="18" viewBox="0 0 18 18" style={{ marginLeft: 7 }}>
              <circle cx="7" cy="9" r="5" fill="#e4f0f6" stroke="#666" strokeWidth="1.3" />
              <path d="M10.500 12.500L15 17" stroke="#333" strokeWidth="2" />
              <path d="M12 3H17M14.500 .5V5.500M12 7H17" stroke="#333" />
            </svg>
            <svg width="18" height="18" viewBox="0 0 18 18" style={{ marginLeft: 8 }}>
              <circle cx="8" cy="8" r="6.500" fill="#eee" stroke="#666" strokeWidth="1.3" />
              <rect x="5" y="5" width="6" height="6" fill="none" stroke="#555" />
              <path d="M12.500 12.500L17 17" stroke="#333" strokeWidth="2" />
            </svg>
            <Caret $m={5} />
          </NavGroup>
          <NavGroup $w={93} $pad={3}>
            <svg width="18" height="18" viewBox="0 0 18 18">
              <rect x="1" y="1" width="15" height="12" fill="#8fb0da" stroke="#333" strokeWidth="1.3" />
              <path d="M6 16H11M8.500 13V16" stroke="#666" strokeWidth="1.3" />
            </svg>
            <Caret $m={2} />
            <svg width="18" height="18" viewBox="0 0 18 18" style={{ marginLeft: 5 }}>
              <rect x="1" y="1" width="16" height="16" fill="#ddd" stroke="#666" />
              <path d="M4 1V17M7 1V17M10.500 1V17M14 1V17M1 4H17M1 7H17M1 10.500H17M1 14H17" stroke="#777" strokeWidth=".7" />
            </svg>
            <Caret $m={2} />
            <svg width="18" height="18" viewBox="0 0 18 18" style={{ marginLeft: 5 }}>
              <rect x="1" y="2" width="16" height="14" fill="#cfdcea" stroke="#2f5b96" />
              <path d="M9 2V16M1 9H17" stroke="#2f5b96" />
              <rect x="3" y="4" width="4" height="3" fill="#8fb0da" />
              <rect x="11" y="4" width="4" height="3" fill="#8fb0da" />
              <rect x="3" y="11" width="4" height="3" fill="#8fb0da" />
              <rect x="11" y="11" width="4" height="3" fill="#8fb0da" />
            </svg>
            <Caret $m={3} />
          </NavGroup>
        </NavBar>
        <FaceCount>2 Faces</FaceCount>
      </Viewport>

      <Timeline>
        <Transport>
          <svg width="16" height="14" viewBox="0 0 16 14"><path d="M1 0H3V14H1ZM14 0V14L4 7Z" fill="#555" /></svg>
          <svg width="16" height="14" viewBox="0 0 16 14"><path d="M10 0V14L1 7ZM12 4H14V10H12Z" fill="#555" /></svg>
          <svg width="16" height="16" viewBox="0 0 16 16"><path d="M2 0V16L14 8Z" fill="#555" /></svg>
          <svg width="16" height="14" viewBox="0 0 16 14"><path d="M5 0V14L15 7ZM1 4H3V10H1Z" fill="#555" /></svg>
          <svg width="16" height="14" viewBox="0 0 16 14"><path d="M2 0V14L12 7ZM13 0H15V14H13Z" fill="#555" /></svg>
        </Transport>
        <Steps>
          <SketchIco s={20} />
          <RevolveMini s={20} />
          <ConstructIco s={20} />
          <SurfaceIco s={20} />
          <ConstructIco s={20} />
          <SurfaceIco s={20} />
          <Bracket />
        </Steps>
        <Marker width="12" height="34" viewBox="0 0 12 34">
          <path d="M0 0H12V4L7 10V32H5V10L0 4Z" fill="#666" />
        </Marker>
        <Gear><FaCog /></Gear>
      </Timeline>
    </Shell>
  );
}

export default App;
